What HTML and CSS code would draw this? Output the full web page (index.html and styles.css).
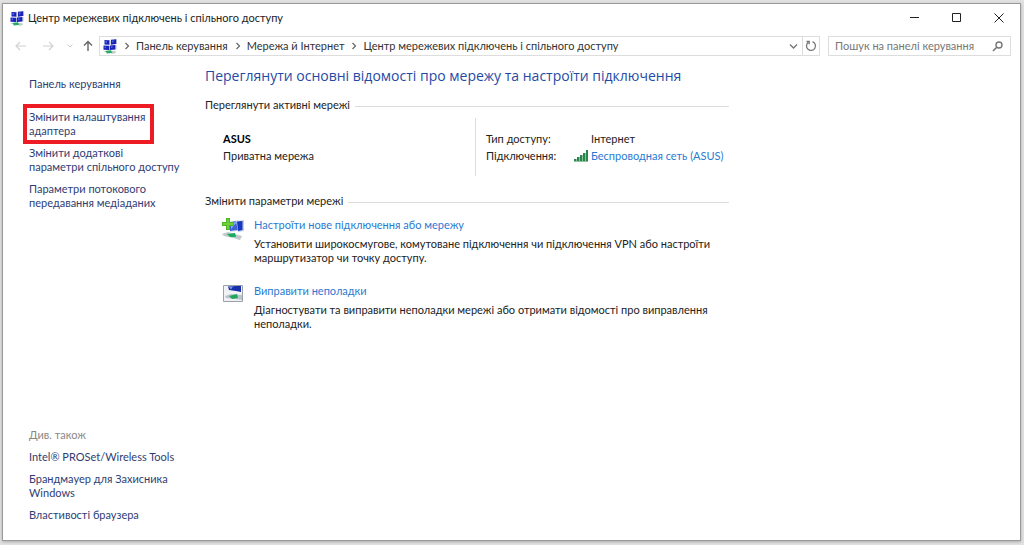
FILE: index.html
```html
<!DOCTYPE html>
<html lang="uk">
<head>
<meta charset="utf-8">
<title>Центр мережевих підключень і спільного доступу</title>
<link rel="stylesheet" href="styles.css">
</head>
<body>
<svg class="defs" aria-hidden="true">
  <symbol id="net" viewBox="0 0 14 15">
    <path d="M1.500 1l5 .3v4.500l-5-.3zM8 .8l5-.5v4.700l-5 .8zM.5 6.500l5.500.2v4.300l-5.500-.3zM7 6.500l5.500-.5v4.500L7 11z" fill="#1a22b8"/>
    <path d="M2.500 1.800l1.500.1v2H2.500zM9 1.500l1.500-.2v2L9 3.500zM1.500 7.500H3v1.700H1.500zM8 7.400l1.500-.1v1.800H8z" fill="#4a66dc"/>
    <path d="M6.500 1.300h.8v5h-.8zM13 .3h.8V5H13zM6 6.700h.8v4.500H6zM12.500 6h.8v4.500h-.8z" fill="#8f9bc9"/>
    <path d="M.5 12.300l4.500-.8 7 .8 1.500.7-2.500 1.800-6-.7z" fill="#b9cfc5"/>
    <path d="M2.500 12l5.500-.8 1.200 2.500-5.200.8z" fill="#28a968"/>
  </symbol>
  <symbol id="chev" viewBox="0 0 6 8"><path d="M1.500 1l3 3-3 3" fill="none" stroke="#666" stroke-width="1.200"/></symbol>
</svg>
<div class="window">
  <header class="titlebar">
    <svg class="net-icon"><use href="#net"/></svg>
    <span class="title">Центр мережевих підключень і спільного доступу</span>
    <button class="caption" aria-label="Згорнути"><svg width="10" height="10"><path d="M0 4.500h9" stroke="#222"/></svg></button>
    <button class="caption" aria-label="Розгорнути"><svg width="10" height="10"><path d="M.5.500h8v8h-8z" fill="none" stroke="#222"/></svg></button>
    <button class="caption" aria-label="Закрити"><svg width="10" height="10"><path d="M.5.500l9 9M9.500.500l-9 9" stroke="#222"/></svg></button>
  </header>
  <nav class="toolbar" aria-label="Навігація">
    <button class="nav-btn" aria-label="Назад"><svg width="12" height="10"><path d="M11 5H1.500M5 1L1 5l4 4" fill="none" stroke="#d2d2d2" stroke-width="1.200"/></svg></button>
    <button class="nav-btn" aria-label="Вперед"><svg width="12" height="10"><path d="M1 5h9.500M7 1l4 4-4 4" fill="none" stroke="#d2d2d2" stroke-width="1.200"/></svg></button>
    <button class="nav-btn narrow" aria-label="Останні розташування"><svg width="8" height="6"><path d="M1.500 1.500L4 4l2.500-2.500" fill="none" stroke="#ccc"/></svg></button>
    <button class="nav-btn narrow" aria-label="Вгору"><svg width="10" height="12"><path d="M5 11V1.500M1 5.500l4-4 4 4" fill="none" stroke="#666" stroke-width="1.400"/></svg></button>
    <div class="address">
      <svg class="net-icon"><use href="#net"/></svg>
      <svg class="chev"><use href="#chev"/></svg><a href="#">Панель керування</a>
      <svg class="chev"><use href="#chev"/></svg><a href="#">Мережа й Інтернет</a>
      <svg class="chev"><use href="#chev"/></svg><a href="#">Центр мережевих підключень і спільного доступу</a>
      <button class="drop" aria-label="Попередні розташування"><svg width="9" height="7"><path d="M1 1.500L4.500 5 8 1.500" fill="none" stroke="#777" stroke-width="1.400"/></svg></button>
      <button class="refresh" aria-label="Оновити"><svg width="12" height="12"><path d="M7.500 1.700A4.500 4.500 0 1 1 3.200 2.400M1.500 1.500h2.700v2.700" fill="none" stroke="#777" stroke-width="1.300"/></svg></button>
    </div>
    <div class="search">
      <input type="search" aria-label="Пошук на панелі керування" placeholder="Пошук на панелі керування">
      <svg width="11" height="11"><circle cx="7" cy="4" r="3" fill="none" stroke="#777" stroke-width="1.400"/><path d="M4.800 6.200L1 10" stroke="#777" stroke-width="1.600"/></svg>
    </div>
  </nav>
  <div class="content">
    <aside class="sidebar">
      <a class="home" href="#">Панель керування</a>
      <a class="marked" href="#">Змінити налаштування адаптера</a>
      <a href="#">Змінити додаткові<br>параметри спільного доступу</a>
      <a href="#">Параметри потокового передавання медіаданих</a>
      <div class="see-also">
        <span class="label">Див. також</span>
        <a href="#">Intel® PROSet/Wireless Tools</a>
        <a href="#">Брандмауер для Захисника Windows</a>
        <a href="#">Властивості браузера</a>
      </div>
    </aside>
    <main class="main">
      <h1>Переглянути основні відомості про мережу та настроїти підключення</h1>
      <h2>Переглянути активні мережі</h2>
      <section class="network">
        <div class="network-name"><strong>ASUS</strong><span>Приватна мережа</span></div>
        <dl class="details">
          <dt>Тип доступу:</dt><dd>Інтернет</dd>
          <dt>Підключення:</dt>
          <dd><svg class="signal" width="14" height="12"><path d="M1 12V9M4 12V7M7 12V5M10 12V3M13 12V0" stroke="#27864a" stroke-width="2"/><path d="M0 11.500h14M2.500 12V9M5.500 12V7M8.500 12V5M11.500 12V3" stroke="#8fc09f"/></svg><a href="#">Беспроводная сеть (ASUS)</a></dd>
        </dl>
      </section>
      <h2>Змінити параметри мережі</h2>
      <section class="task">
        <svg class="task-icon" viewBox="0 0 22 22">
          <path d="M7 4l9-2v11l-8 1z" fill="#dce4ee"/><path d="M8 4l8-1v9l-8 1z" fill="#3d62d6"/>
          <path d="M14 3l8-1v11l-6 1z" fill="#c3cfe6"/><path d="M15 3.500l5.500-.5v9L16 13z" fill="#1735be"/><path d="M9 5l6-1-6 7z" fill="#8eb2f2"/>
          <path d="M0 16l6-2 14 4-2 4-7-2-9-2z" fill="#bfcaca"/><path d="M5 16l8-1 1 4-6 0z" fill="#1bac62"/>
          <path d="M4 0h4v4h4v4H8v4H4V8H0V4h4z" fill="#4cb51f"/><path d="M5 1h2v4h4v2H7v4H5V7H1V5h4z" fill="#6fd03c"/>
        </svg>
        <div class="task-text">
          <a href="#">Настроїти нове підключення або мережу</a>
          <p>Установити широкосмугове, комутоване підключення чи підключення VPN або настроїти маршрутизатор чи точку доступу.</p>
        </div>
      </section>
      <section class="task">
        <svg class="task-icon" viewBox="0 0 22 22">
          <path d="M1.500 1.500h19v16h-19z" fill="#f0f2f5" stroke="#9ba0a6"/>
          <path d="M6 2.500l8-.5v5l-7-1zM14 2h5v6l-5-1z" fill="#172fa8"/><path d="M7 3l4-.5-2 3z" fill="#7898e8"/>
          <path d="M3 12l6-2 11 1v5l-7-1-9-1z" fill="#bcc6ca"/><path d="M7 12l8-2 1 4-6 1z" fill="#20a75f"/>
        </svg>
        <div class="task-text">
          <a href="#">Виправити неполадки</a>
          <p>Діагностувати та виправити неполадки мережі або отримати відомості про виправлення неполадки.</p>
        </div>
      </section>
    </main>
  </div>
</div>
</body>
</html>
```
FILE: styles.css
```css
* { box-sizing: border-box; }
body {
  margin: 0;
  min-height: 100vh;
  padding: 3px 3px 4px 2px;
  display: flex;
  background: #e2e2e2;
  color: #222;
  font: 11px/14px Lato, "Open Sans", "Noto Sans", sans-serif;
}
a { color: #2a7ad2; text-decoration: none; }
button { border: 0; padding: 0; background: none; display: flex; align-items: center; justify-content: center; }
svg { flex: none; display: block; }
.defs { position: absolute; width: 0; height: 0; }
.window {
  flex: 1;
  display: flex;
  flex-direction: column;
  background: #fff;
  border: 1px solid #999;
  box-shadow: 0 1px 3px #aaa;
}
.titlebar { display: flex; align-items: center; height: 28px; padding-left: 7px; }
.net-icon { width: 14px; height: 15px; }
.title { flex: 1; margin-left: 4px; }
.caption { width: 42px; height: 28px; }
.toolbar { display: flex; height: 20px; margin: 4px 9px 1px 4px; }
.nav-btn { width: 27px; }
.nav-btn.narrow { width: 18px; }
.address {
  flex: 1;
  display: flex;
  align-items: center;
  margin-left: 2px;
  padding-left: 3px;
  border: 1px solid #ddd;
}
.address a { color: #333; }
.chev { width: 6px; height: 8px; margin: 0 6px 0 7px; }
.drop { width: 18px; margin-left: auto; }
.refresh { width: 17px; height: 18px; border-left: 1px solid #ddd; }
.search {
  display: flex;
  align-items: center;
  width: 183px;
  margin-left: 8px;
  padding: 0 7px 0 6px;
  border: 1px solid #ddd;
}
.search input {
  flex: 1;
  min-width: 0;
  padding: 0;
  border: 0;
  outline: 0;
  background: none;
  font: inherit;
}
.search input::placeholder { color: #777; opacity: 1; }
.content { flex: 1; display: flex; }
.sidebar {
  display: flex;
  flex-direction: column;
  align-items: flex-start;
  gap: 8px;
  width: 202px;
  padding: 20px 20px 18px 26px;
}
.sidebar a { color: #2f3d73; }
.sidebar .home { margin-bottom: 11px; }
.sidebar .marked { width: 119px; outline: 4px solid #ed1c24; outline-offset: 2px; }
.see-also { display: flex; flex-direction: column; gap: 8px; margin-top: auto; }
.label { color: #888; }
.main { flex: 1; max-width: 524px; padding-top: 9px; }
h1 { margin: 0; font: 400 14px/20px "Open Sans", "Noto Sans", sans-serif; color: #1f4ba5; white-space: nowrap; }
h2 { display: flex; align-items: center; gap: 5px; margin: 12px 0 0; font-size: 11px; line-height: 14px; font-weight: 400; }
h2::after { content: ""; flex: 1; height: 1px; margin-top: 3px; background: #ddd; }
.network { display: flex; height: 58px; margin: 6px 0 18px; }
.network-name { flex: 1; display: flex; flex-direction: column; padding: 12px 0 0 18px; line-height: 17px; }
.network-name strong { color: #000; }
.details {
  display: grid;
  grid-template-columns: 105px 1fr;
  grid-auto-rows: 17px;
  width: 254px;
  margin: 0;
  padding: 12px 0 0 10px;
  border-left: 1px solid #ddd;
  line-height: 17px;
}
.details dd { display: flex; align-items: center; margin: 0; white-space: nowrap; }
.signal { margin: 0 3px 0 -17px; }
.task { display: flex; gap: 10px; margin: 10px 0 19px; padding-left: 17px; }
.task-icon { width: 22px; height: 22px; }
.task-text { flex: 1; }
.task-text a { display: block; }
.task p { margin: 5px 0 0; }
```
